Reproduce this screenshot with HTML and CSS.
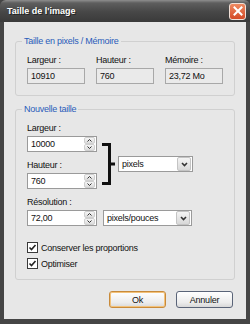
FILE: index.html
```html
<!DOCTYPE html>
<html lang="fr">
<head>
    <meta charset="UTF-8">
    <title>Taille de l'image</title>
    <link rel="stylesheet" href="styles.css">
</head>
<body>
    <div class="window">
        <div class="titlebar">
            <span class="title">Taille de l'image</span>
            <div class="close">
                <svg width="10" height="10" viewBox="0 0 10 10"><path d="M1.5 1.5 L8.5 8.5 M8.5 1.5 L1.5 8.5" stroke="#fff" stroke-width="2" stroke-linecap="square"/></svg>
            </div>
        </div>
        <div class="content">
            <fieldset class="group first">
                <legend>Taille en pixels / Mémoire</legend>
                <div class="group-body row3">
                    <div class="col">
                        <div class="label">Largeur :</div>
                        <div class="field readonly">10910</div>
                    </div>
                    <div class="col">
                        <div class="label">Hauteur :</div>
                        <div class="field readonly">760</div>
                    </div>
                    <div class="col">
                        <div class="label">Mémoire :</div>
                        <div class="field readonly">23,72 Mo</div>
                    </div>
                </div>
            </fieldset>

            <fieldset class="group second">
                <legend>Nouvelle taille</legend>
                <div class="group-body">
                    <div class="size-row">
                        <div class="size-col">
                            <div class="label">Largeur :</div>
                            <div class="field spin">
                                <span class="val">10000</span>
                                <div class="spinner">
                                    <div class="spin-btn"><svg width="5" height="3" viewBox="0 0 5 3"><path d="M0.5 2.5 L2.5 0.5 L4.5 2.5" fill="none" stroke="#333" stroke-width="1"/></svg></div>
                                    <div class="spin-btn"><svg width="5" height="3" viewBox="0 0 5 3"><path d="M0.5 0.5 L2.5 2.5 L4.5 0.5" fill="none" stroke="#333" stroke-width="1"/></svg></div>
                                </div>
                            </div>
                            <div class="label gap">Hauteur :</div>
                            <div class="field spin">
                                <span class="val">760</span>
                                <div class="spinner">
                                    <div class="spin-btn"><svg width="5" height="3" viewBox="0 0 5 3"><path d="M0.5 2.5 L2.5 0.5 L4.5 2.5" fill="none" stroke="#333" stroke-width="1"/></svg></div>
                                    <div class="spin-btn"><svg width="5" height="3" viewBox="0 0 5 3"><path d="M0.5 0.5 L2.5 2.5 L4.5 0.5" fill="none" stroke="#333" stroke-width="1"/></svg></div>
                                </div>
                            </div>
                        </div>
                        <svg class="bracket" width="13" height="42" viewBox="0 0 13 42">
                            <path d="M0 1.5 H7.5 V40.5 H0 M7.5 21 H13" fill="none" stroke="#111" stroke-width="3"/>
                        </svg>
                        <div class="select unit">
                            <span class="val">pixels</span>
                            <div class="drop"><svg width="7" height="5" viewBox="0 0 7 5"><path d="M1 1 L3.5 3.5 L6 1" fill="none" stroke="#333" stroke-width="1.6"/></svg></div>
                        </div>
                    </div>

                    <div class="label gap res-label">Résolution :</div>
                    <div class="res-row">
                        <div class="field spin">
                            <span class="val">72,00</span>
                            <div class="spinner">
                                <div class="spin-btn"><svg width="5" height="3" viewBox="0 0 5 3"><path d="M0.5 2.5 L2.5 0.5 L4.5 2.5" fill="none" stroke="#333" stroke-width="1"/></svg></div>
                                <div class="spin-btn"><svg width="5" height="3" viewBox="0 0 5 3"><path d="M0.5 0.5 L2.5 2.5 L4.5 0.5" fill="none" stroke="#333" stroke-width="1"/></svg></div>
                            </div>
                        </div>
                        <div class="select res-unit">
                            <span class="val">pixels/pouces</span>
                            <div class="drop"><svg width="7" height="5" viewBox="0 0 7 5"><path d="M1 1 L3.5 3.5 L6 1" fill="none" stroke="#333" stroke-width="1.6"/></svg></div>
                        </div>
                    </div>

                    <div class="check first-check">
                        <div class="box"><svg width="9" height="9" viewBox="0 0 9 9"><path d="M1.5 4.5 L3.5 6.5 L7.5 2" fill="none" stroke="#222" stroke-width="1.6"/></svg></div>
                        <span>Conserver les proportions</span>
                    </div>
                    <div class="check">
                        <div class="box"><svg width="9" height="9" viewBox="0 0 9 9"><path d="M1.5 4.5 L3.5 6.5 L7.5 2" fill="none" stroke="#222" stroke-width="1.6"/></svg></div>
                        <span>Optimiser</span>
                    </div>
                </div>
            </fieldset>

            <div class="buttons">
                <div class="btn default">Ok</div>
                <div class="btn">Annuler</div>
            </div>
        </div>
    </div>
</body>
</html>
```

FILE: styles.css
```css
body {
    margin: 0;
    font-family: "Liberation Sans", Arial, sans-serif;
    font-size: 9px;
    letter-spacing: -0.25px;
    color: #111;
    background: #fff;
}
.window {
    width: 250px;
    height: 324px;
    display: flex;
    flex-direction: column;
    background: #454545;
}
.titlebar {
    height: 22px;
    flex: none;
    display: flex;
    align-items: center;
    justify-content: space-between;
    padding: 0 4px 0 7px;
    background: linear-gradient(#8e8e8e 0, #5e5e5e 3px, #474747 12px, #3a3a3a 22px);
    border-radius: 6px 6px 0 0;
}
.title {
    color: #fff;
    font-weight: bold;
    font-size: 9px;
    letter-spacing: 0;
    text-shadow: 1px 1px 0 #222;
}
.close {
    width: 15px;
    height: 15px;
    border: 1px solid #f0e0d8;
    border-radius: 3px;
    background: linear-gradient(#ee8a62, #d44a26);
    display: flex;
    align-items: center;
    justify-content: center;
}
.content {
    flex: 1;
    margin: 0 4px 5px 4px;
    background: #e7e7e7;
    padding: 14px 11px 0 11px;
}
.group {
    margin: 0;
    border: 1px solid #d0d0d0;
    border-radius: 3px;
    padding: 0 0 0 6px;
}
.group legend {
    padding: 0 2px;
    color: #2a5cba;
    font-size: 9px;
    line-height: 11px;
}
.group-body {
    padding-left: 5px;
}
.first .group-body {
    padding-top: 8px;
    padding-bottom: 11px;
}
.second {
    margin-top: 8px;
}
.second .group-body {
    padding-top: 8px;
    padding-bottom: 10px;
}
.row3 {
    display: flex;
    gap: 11px;
}
.col {
    width: 58px;
}
.label {
    line-height: 11px;
    height: 11px;
    margin-bottom: 2px;
}
.label.gap {
    margin-top: 8px;
}
.field {
    height: 16px;
    box-sizing: border-box;
    border: 1px solid #9a9a9a;
    background: #fff;
    display: flex;
    align-items: center;
    padding-left: 3px;
    line-height: 14px;
}
.readonly {
    background: #eaeaea;
    border-color: #a8a8a8;
}
.spin {
    width: 70px;
    justify-content: space-between;
    padding-right: 1px;
}
.spinner {
    width: 11px;
    height: 14px;
    display: flex;
    flex-direction: column;
}
.spin-btn {
    flex: 1;
    background: linear-gradient(#f6f6f6, #dcdcdc);
    border: 1px solid #cfcfcf;
    border-radius: 2px;
    display: flex;
    align-items: center;
    justify-content: center;
}
.size-row {
    display: flex;
    align-items: flex-start;
}
.bracket {
    margin: 20px 0 0 5px;
}
.select {
    height: 16px;
    box-sizing: border-box;
    border: 1px solid #9a9a9a;
    background: #fff;
    display: flex;
    align-items: center;
    justify-content: space-between;
    padding: 0 1px 0 3px;
}
.unit {
    width: 75px;
    margin: 33px 0 0 3px;
}
.res-label {
    margin-top: 9px;
}
.res-row {
    display: flex;
    gap: 6px;
}
.res-unit {
    width: 89px;
}
.drop {
    width: 12px;
    height: 12px;
    background: linear-gradient(#f4f4f4, #d8d8d8);
    border: 1px solid #c4c4c4;
    border-radius: 2px;
    display: flex;
    align-items: center;
    justify-content: center;
}
.check {
    display: flex;
    align-items: center;
    gap: 3px;
    height: 11px;
    margin-top: 5px;
}
.first-check {
    margin-top: 16px;
}
.box {
    width: 11px;
    height: 11px;
    box-sizing: border-box;
    border: 1px solid #3a3a3a;
    background: #fff;
    display: flex;
    align-items: center;
    justify-content: center;
}
.buttons {
    display: flex;
    justify-content: flex-end;
    gap: 10px;
    margin-top: 11px;
    padding-right: 2px;
}
.btn {
    width: 57px;
    height: 17px;
    box-sizing: border-box;
    border: 1px solid #5a6478;
    border-radius: 3px;
    background: linear-gradient(#ffffff, #ececec 70%, #d8d8d8);
    display: flex;
    align-items: center;
    justify-content: center;
}
.btn.default {
    border-color: #c88a3a;
    box-shadow: inset 0 0 0 1px #f3c27a;
}
```
